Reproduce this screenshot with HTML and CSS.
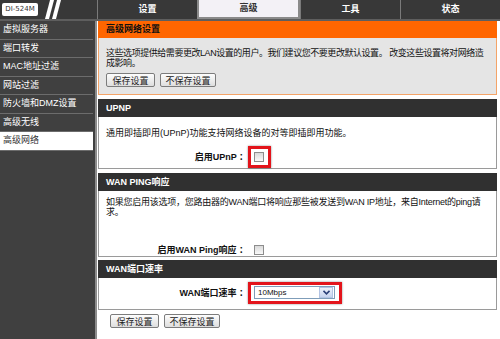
FILE: index.html
```html
<!DOCTYPE html>
<html lang="zh-CN">
<head>
    <meta charset="UTF-8">
    <title>高级网络设置</title>
    <link rel="stylesheet" href="styles.css">
</head>
<body>
    <div class="topbar">
        <div class="brand">
            <span class="logo">DI-524M</span>
            <svg class="slashes" width="18" height="19" viewBox="0 0 18 19">
                <polygon points="1,19 5,19 10,0 6,0" fill="#fff"/>
                <polygon points="8,19 12,19 17,0 13,0" fill="#fff"/>
            </svg>
        </div>
        <ul class="tabs">
            <li class="tab">设置</li>
            <li class="tab active">高级</li>
            <li class="tab">工具</li>
            <li class="tab">状态</li>
        </ul>
    </div>

    <div class="main">
        <!-- 左侧菜单 -->
        <ul class="side-menu">
            <li>虚拟服务器</li>
            <li>端口转发</li>
            <li>MAC地址过滤</li>
            <li>网站过滤</li>
            <li>防火墙和DMZ设置</li>
            <li>高级无线</li>
            <li class="active">高级网络</li>
        </ul>

        <div class="content">
            <div class="box box-intro">
                <div class="box-title">高级网络设置</div>
                <div class="box-body">
                    <p class="intro-text">这些选项提供给需要更改LAN设置的用户。我们建议您不要更改默认设置。 改变这些设置将对网络造成影响。</p>
                    <div class="btn-row">
                        <button class="btn btn-save">保存设置</button>
                        <button class="btn">不保存设置</button>
                    </div>
                </div>
            </div>

            <div class="box">
                <div class="box-title">UPNP</div>
                <div class="box-body body-upnp">
                    <p>通用即插即用(UPnP)功能支持网络设备的对等即插即用功能。</p>
                    <div class="form-row">
                        <label class="form-label">启用UPnP ：</label>
                        <span class="mark mark-on"><span class="check"></span></span>
                    </div>
                </div>
            </div>

            <div class="box">
                <div class="box-title">WAN PING响应</div>
                <div class="box-body body-ping">
                    <p class="ping-text">如果您启用该选项，您路由器的WAN端口将响应那些被发送到WAN IP地址，来自Internet的ping请求。</p>
                    <div class="form-row">
                        <label class="form-label">启用WAN Ping响应 ：</label>
                        <span class="mark"><span class="check"></span></span>
                    </div>
                </div>
            </div>

            <div class="box box-speed">
                <div class="box-title">WAN端口速率</div>
                <div class="box-body body-speed">
                    <div class="form-row">
                        <label class="form-label">WAN端口速率 ：</label>
                        <span class="mark mark-on mark-select">
                            <span class="select">
                                <span class="select-value">10Mbps</span>
                                <span class="select-arrow">
                                    <svg width="7" height="5" viewBox="0 0 7 5"><path d="M0.5 0.8 L3.5 3.8 L6.5 0.8" fill="none" stroke="#2a3f78" stroke-width="1.6"/></svg>
                                </span>
                            </span>
                        </span>
                    </div>
                </div>
            </div>

            <div class="btn-row btn-row-bottom">
                <button class="btn btn-save">保存设置</button>
                <button class="btn">不保存设置</button>
            </div>
        </div>
    </div>
</body>
</html>
```

FILE: styles.css
```css
body {
    margin: 0;
    font-family: "Liberation Sans", "Noto Sans CJK SC", sans-serif;
    font-size: 9px;
    color: #111;
    background-color: #fff;
}

.topbar {
    display: flex;
    height: 19px;
    background-color: #383838;
    border-bottom: 2px solid #5e5e5e;
}

.brand {
    width: 97px;
    display: flex;
    align-items: center;
    padding-left: 2px;
    box-sizing: border-box;
}

.logo {
    width: 36px;
    height: 13px;
    line-height: 13px;
    background-color: #fff;
    color: #333;
    font-family: "DejaVu Sans", sans-serif;
    font-size: 7px;
    text-align: center;
    border-radius: 2px;
}

.slashes {
    margin-left: 6px;
}

.tabs {
    display: flex;
    flex: 1;
    margin: 0;
    padding: 0;
    list-style: none;
}

.tab {
    flex: 1;
    border-left: 1px solid #7a7a7a;
    color: #fff;
    font-weight: bold;
    text-align: center;
    line-height: 19px;
}

.tab.active {
    height: 17px;
    line-height: 17px;
    background-color: #f3f1f6;
    color: #333;
    border: 2px solid #8a8a8a;
    border-top: 0;
}

.main {
    display: flex;
}

.side-menu {
    width: 93px;
    min-height: 318px;
    margin: 0;
    padding: 0 2px 0 0;
    list-style: none;
    background-color: #404040;
    border-right: 2px solid #8c8c8c;
}

.side-menu li {
    height: 17.5px;
    line-height: 17.5px;
    padding-left: 3px;
    color: #fff;
    border-bottom: 1px solid #6c6c6c;
}

.side-menu li.active {
    background-color: #fff;
    color: #333;
}

.content {
    flex: 1;
    padding: 0 3px 0 1px;
}

.box {
    margin-top: 4px;
}

.box-intro {
    margin-top: 0;
}

.box-speed {
    margin-top: 3px;
}

.box-title {
    height: 18px;
    line-height: 18px;
    padding-left: 8px;
    background-color: #303030;
    color: #fff;
    font-weight: bold;
}

.box-body {
    border: 1px solid #9a9a9a;
    border-top: 0;
    padding: 0 7px;
}

.box-body p {
    margin: 0;
    line-height: 10px;
}

.intro-text {
    letter-spacing: -0.45px;
}

.ping-text {
    letter-spacing: -0.25px;
}

.box-intro .box-title {
    height: 17px;
    line-height: 17px;
    background-color: #ff6600;
    color: #111;
}

.box-intro .box-body {
    padding-top: 10px;
    padding-bottom: 7px;
    background-color: #e5e5e5;
    border-color: #f4a468;
}

.body-upnp {
    padding-top: 11px;
}

.body-upnp .form-row {
    margin-top: 8px;
}

.body-ping {
    padding-top: 6px;
    padding-bottom: 1px;
}

.body-ping .form-row {
    height: 11px;
    margin-top: 27px;
}

.body-ping .mark {
    border-width: 0 3px;
    padding-top: 0;
    padding-bottom: 0;
}

.body-speed {
    padding-top: 4px;
    padding-bottom: 5px;
}

.form-row {
    display: flex;
    align-items: center;
}

.form-label {
    width: 142px;
    line-height: 12px;
    text-align: right;
    font-weight: bold;
}

/* kotak merah penanda */
.mark {
    display: inline-flex;
    padding: 3px 4px 3px 3px;
    border: 3px solid transparent;
}

.mark-on {
    border-color: #e3141b;
    box-shadow: 0 0 2px rgba(0, 0, 0, 0.45);
}

.check {
    width: 8px;
    height: 8px;
    border: 1px solid #8d8d8d;
    background: linear-gradient(#d9d9d9, #fafafa);
}

.mark-select {
    padding: 1px 4px 2px 3px;
}

.select {
    display: flex;
    align-items: center;
    justify-content: space-between;
    width: 81px;
    height: 13px;
    box-sizing: border-box;
    border: 1px solid #7f9db9;
    background-color: #fff;
}

.select-value {
    padding-left: 3px;
    font-size: 8px;
}

.select-arrow {
    display: flex;
    align-items: center;
    justify-content: center;
    width: 12px;
    height: 9px;
    margin-right: 1px;
    border: 1px solid #b3c4e4;
    background: linear-gradient(#eef2fb, #c6d4ef);
}

.btn-row {
    display: flex;
    gap: 5px;
    margin-top: 5px;
}

.btn {
    height: 14px;
    width: 56px;
    padding: 0;
    font-family: inherit;
    font-size: 9px;
    color: #222;
    background: linear-gradient(#fdfdfd, #dedede);
    border: 1px solid #7c7c7c;
    border-radius: 2px;
}

.btn-save {
    width: 49px;
}

.btn-row-bottom {
    margin-top: 4px;
    padding-left: 12px;
}
```
